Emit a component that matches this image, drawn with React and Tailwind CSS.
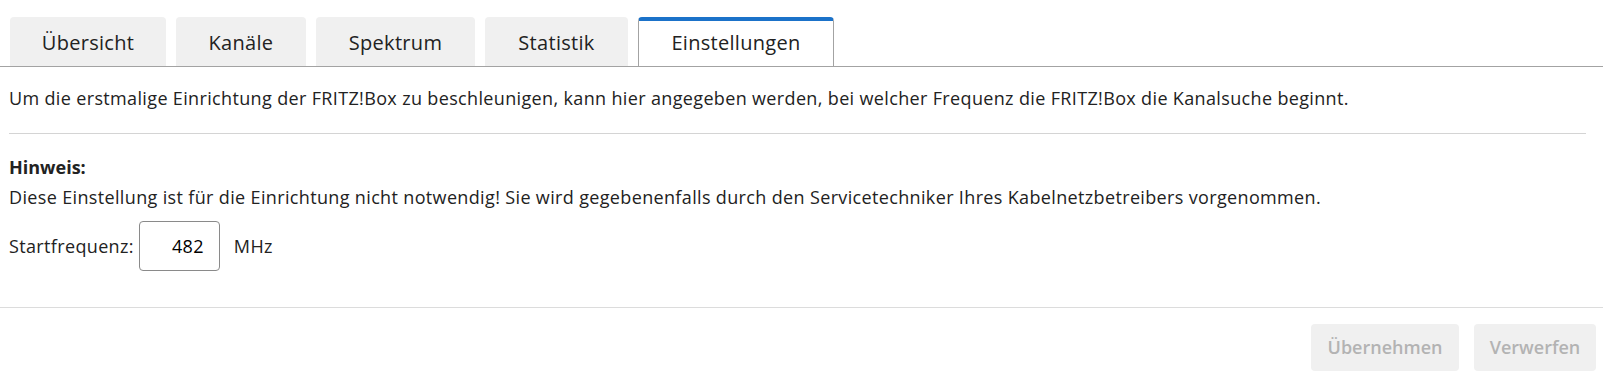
import { useState } from 'react';

const tabs = [
  { id: 'overview', label: 'Übersicht', width: 'w-[156px]' },
  { id: 'channels', label: 'Kanäle', width: 'w-[130px]' },
  { id: 'spectrum', label: 'Spektrum', width: 'w-[159px]' },
  { id: 'stats', label: 'Statistik', width: 'w-[143px]' },
  { id: 'settings', label: 'Einstellungen', width: 'w-[196px]' },
];

function App() {
  const [activeTab, setActiveTab] = useState('settings');
  const [freq, setFreq] = useState('482');

  return (
    <div className="w-[1603px] h-[392px] bg-white text-[#222] font-['Open_Sans','Liberation_Sans',sans-serif] overflow-hidden">
      <nav className="flex gap-[10px] pl-[10px] pt-[17px] border-b border-[#a3a3a3]">
        {tabs.map(tab => (
          <button
            key={tab.id}
            onClick={() => setActiveTab(tab.id)}
            className={`${tab.width} h-[49px] rounded-t-[4px] text-[20px] tracking-[0.3px] flex items-center justify-center ${
              activeTab === tab.id
                ? 'bg-white border-t-[4px] border-t-[#1b72c9] border-x border-x-[#a3a3a3] pb-[2px]'
                : 'bg-[#f0f0f0] pt-[2px]'
            }`}
          >
            {tab.label}
          </button>
        ))}
      </nav>

      <div className="px-[9px] pt-[17px] text-[18px] tracking-[0.35px] leading-[28px]">
        <p>
          Um die erstmalige Einrichtung der FRITZ!Box zu beschleunigen, kann hier angegeben werden, bei welcher Frequenz die FRITZ!Box die Kanalsuche beginnt.
        </p>
        <hr className="mt-[21px] mr-[8px] border-t border-[#d4d4d4]" />
        <p className="mt-[19px] font-bold tracking-normal">Hinweis:</p>
        <p className="mt-[2px]">
          Diese Einstellung ist für die Einrichtung nicht notwendig! Sie wird gegebenenfalls durch den Servicetechniker Ihres Kabelnetzbetreibers vorgenommen.
        </p>
        <div className="mt-[10px] mb-[36px] flex items-center">
          <label htmlFor="freq" className="mr-[5px]">Startfrequenz:</label>
          <input
            id="freq"
            value={freq}
            onChange={e => setFreq(e.target.value)}
            className="w-[81px] h-[50px] border border-[#8a8a8a] rounded-[4px] text-right pr-[15px] text-[18px] text-black outline-none"
          />
          <span className="ml-[14px]">MHz</span>
        </div>
      </div>

      <div className="border-t border-[#dcdcdc] flex justify-end gap-[15px] pt-[16px] pr-[7px]">
        <button disabled className="w-[148px] h-[47px] rounded-[4px] bg-[#f0f0f0] text-[#b3b3b3] text-[18px] font-semibold">
          Übernehmen
        </button>
        <button disabled className="w-[122px] h-[47px] rounded-[4px] bg-[#f0f0f0] text-[#b3b3b3] text-[18px] font-semibold">
          Verwerfen
        </button>
      </div>
    </div>
  );
}

export default App;
